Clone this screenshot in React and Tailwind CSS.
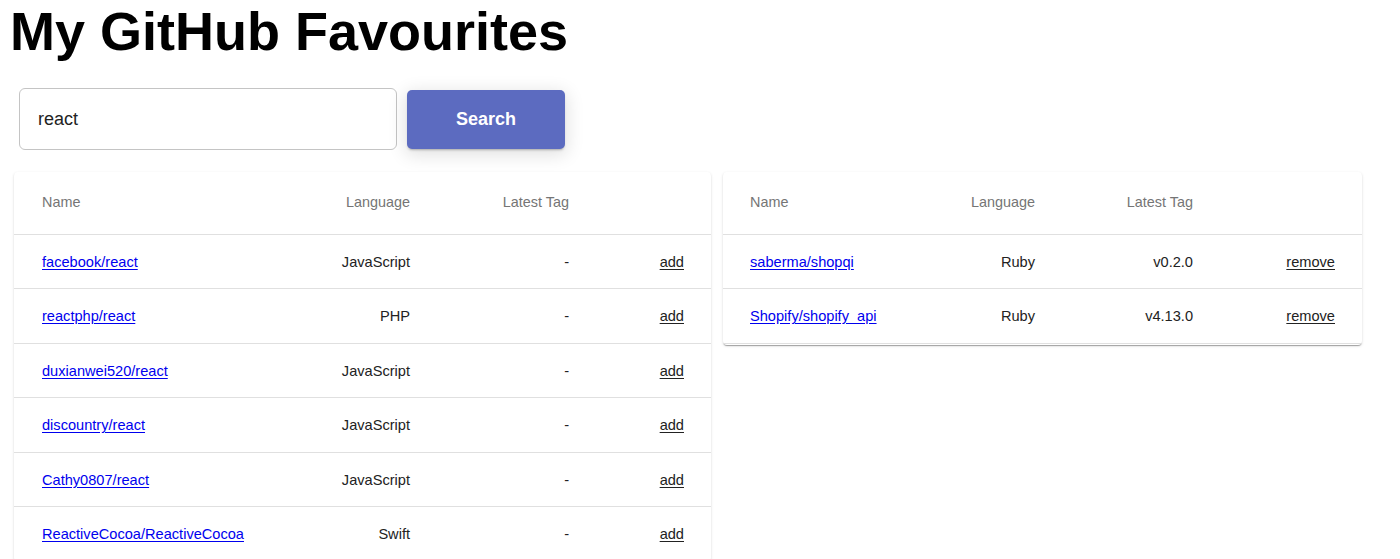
import React, { useState } from "react";

const results = [
  { name: "facebook/react", language: "JavaScript", tag: "-" },
  { name: "reactphp/react", language: "PHP", tag: "-" },
  { name: "duxianwei520/react", language: "JavaScript", tag: "-" },
  { name: "discountry/react", language: "JavaScript", tag: "-" },
  { name: "Cathy0807/react", language: "JavaScript", tag: "-" },
  { name: "ReactiveCocoa/ReactiveCocoa", language: "Swift", tag: "-" },
];

const favourites = [
  { name: "saberma/shopqi", language: "Ruby", tag: "v0.2.0" },
  { name: "Shopify/shopify_api", language: "Ruby", tag: "v4.13.0" },
];

const RepoTable = ({ rows, action, widths, namePad, className }) => (
  <div className={"bg-white rounded shadow-[0_2px_1px_-1px_rgba(0,0,0,0.2),0_1px_1px_0_rgba(0,0,0,0.14),0_1px_3px_0_rgba(0,0,0,0.12)] " + className}>
    <table className="w-full table-fixed border-collapse">
      <colgroup>
        {widths.map((w, i) => (
          <col key={i} style={{ width: w }} />
        ))}
      </colgroup>
      <thead>
        <tr className="h-[62px] border-b border-[#e0e0e0] text-[14.4px] text-[#757575]">
          <th className={namePad + " text-left font-normal"}>Name</th>
          <th className="text-right font-normal">Language</th>
          <th className="text-right font-normal">Latest Tag</th>
          <th></th>
        </tr>
      </thead>
      <tbody>
        {rows.map((repo) => (
          <tr key={repo.name} className="h-[54.5px] border-b border-[#e0e0e0] text-[14.6px] text-[#222]">
            <td className={namePad + " pt-[3px] text-left"}>
              <a href="#" className="text-[#0000ee] underline underline-offset-2">
                {repo.name}
              </a>
            </td>
            <td className="pt-[3px] text-right">{repo.language}</td>
            <td className="pt-[3px] text-right">{repo.tag}</td>
            <td className="pr-[27px] pt-[3px] text-right">
              <button className="underline underline-offset-2 text-[#222] cursor-pointer">{action}</button>
            </td>
          </tr>
        ))}
      </tbody>
    </table>
  </div>
);

const App = () => {
  const [searchTerm, setSearchTerm] = useState("react");

  return (
    <div className="min-h-screen bg-white font-['Liberation_Sans',Arial,sans-serif] text-black">
      <h1 className="pl-[10px] text-[54px] font-bold leading-[62px]">My GitHub Favourites</h1>

      <div className="flex items-center gap-[10px] pl-[19px] mt-[26px]">
        <input
          type="text"
          value={searchTerm}
          onChange={(e) => setSearchTerm(e.target.value)}
          className="w-[378px] h-[62px] px-[18px] text-[18px] text-[#222] border border-[#c4c4c4] rounded-[6px] focus:outline-none"
        />
        <button className="w-[158px] h-[59px] bg-[#5c6bc0] text-white text-[18px] font-bold rounded-[5px] shadow-[0_3px_1px_-2px_rgba(0,0,0,0.12),0_2px_2px_0_rgba(0,0,0,0.1),0_4px_18px_2px_rgba(0,0,0,0.12)]">
          Search
        </button>
      </div>

      <div className="flex items-start gap-3 pl-[14px] mt-[22px]">
        <RepoTable
          rows={results}
          action="add"
          namePad="pl-[28px]"
          widths={["250px", "146px", "159px", "142px"]}
          className="w-[697px]"
        />
        <RepoTable
          rows={favourites}
          action="remove"
          namePad="pl-[27px]"
          widths={["170px", "142px", "158px", "169px"]}
          className="w-[639px] pb-[1px]"
        />
      </div>
    </div>
  );
};

export default App;
